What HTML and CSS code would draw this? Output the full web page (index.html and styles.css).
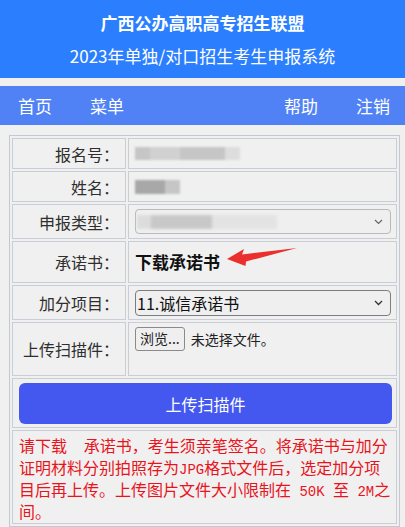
FILE: index.html
```html
<!DOCTYPE html>
<html lang="zh-CN">
<head>
<meta charset="utf-8">
<title>广西公办高职高专招生联盟</title>
<link rel="stylesheet" href="styles.css">
</head>
<body>
<header class="header">
  <div class="title-main">广西公办高职高专招生联盟</div>
  <div class="title-sub">2023年单独/对口招生考生申报系统</div>
</header>
<nav class="nav">
  <a class="nav-item">首页</a>
  <a class="nav-item">菜单</a>
  <a class="nav-item nav-push">帮助</a>
  <a class="nav-item">注销</a>
</nav>
<table class="form">
  <tr class="r-short">
    <td class="label">报名号：</td>
    <td class="value"><span class="blur blur-id"></span></td>
  </tr>
  <tr class="r-short">
    <td class="label">姓名：</td>
    <td class="value"><span class="blur blur-name"></span></td>
  </tr>
  <tr class="r-select">
    <td class="label">申报类型：</td>
    <td class="value">
      <div class="select select-faded">
        <span class="blur blur-type"></span>
        <svg class="chev" width="9" height="6" viewBox="0 0 9 6"><path d="M1 1 L4.5 4.5 L8 1" fill="none" stroke="#666" stroke-width="1.2"/></svg>
      </div>
    </td>
  </tr>
  <tr class="r-pledge">
    <td class="label">承诺书：</td>
    <td class="value">
      <div class="pledge">
        <a class="pledge-link">下载承诺书</a>
        <svg class="arrow" width="74" height="22" viewBox="0 0 74 22"><path d="M2 14 L19 4 L17 9.5 L72 3 L21 16.5 L20.5 21 Z" fill="#ea2f2c"/></svg>
      </div>
    </td>
  </tr>
  <tr class="r-select2">
    <td class="label">加分项目：</td>
    <td class="value">
      <div class="select">
        <span class="select-text">11.诚信承诺书</span>
        <svg class="chev" width="9" height="6" viewBox="0 0 9 6"><path d="M1 1 L4.5 4.5 L8 1" fill="none" stroke="#333" stroke-width="1.3"/></svg>
      </div>
    </td>
  </tr>
  <tr class="r-upload">
    <td class="label">上传扫描件：</td>
    <td class="value value-top">
      <div class="file">
        <span class="file-btn">浏览...</span>
        <span class="file-text">未选择文件。</span>
      </div>
    </td>
  </tr>
  <tr class="r-submit">
    <td class="submit-cell" colspan="2"><div class="submit">上传扫描件</div></td>
  </tr>
  <tr>
    <td class="notice" colspan="2">请下载<span class="half">&nbsp;&nbsp;</span>承诺书，考生须亲笔签名。将承诺书与加分证明材料分别拍照存为<span class="half">JPG</span>格式文件后，选定加分项目后再上传。上传图片文件大小限制在<span class="half">&nbsp;50K&nbsp;</span>至<span class="half">&nbsp;2M</span>之间。</td>
  </tr>
</table>
</body>
</html>
```
FILE: styles.css
```css
* { box-sizing: border-box; }
body {
  margin: 0;
  background: #f0f0f0;
  font-family: "Noto Sans CJK SC", "Noto Sans", sans-serif;
  color: #333;
}
.header {
  background: #2b7ffe;
  color: #fff;
  text-align: center;
  padding: 6px 0;
  font-size: 17px;
  line-height: 33px;
}
.title-main { font-weight: bold; }
.nav {
  margin-top: 8px;
  height: 39px;
  background: #5082f6;
  display: flex;
  align-items: center;
  gap: 38px;
  padding: 0 15px 0 18px;
}
.nav-item {
  color: #fff;
  font-size: 17px;
  line-height: 39px;
}
.nav-push { margin-left: auto; }

.form {
  width: calc(100% - 14px);
  margin: 10px 5px 0 9px;
  border: 1px solid #c3c8d1;
  border-spacing: 2px;
  border-collapse: separate;
  table-layout: fixed;
}
.form td {
  border: 1px solid #c9cdd6;
  padding: 0;
}
.label {
  width: 114px;
  text-align: right;
  padding-right: 6px !important;
  font-size: 16px;
  color: #2e2e2e;
  vertical-align: middle;
}
.value {
  padding: 0 5px 0 6px !important;
  vertical-align: middle;
}
.value-top { vertical-align: top !important; padding-top: 4px !important; }
.r-short td { height: 31px; }
.r-select td { height: 35px; }
.r-pledge td { height: 42px; }
.r-select2 td { height: 35px; }
.r-upload td { height: 54px; }
.r-submit td { height: 49px; }

.blur {
  display: block;
  filter: blur(0.9px);
}
.blur-id {
  width: 105px;
  height: 13px;
  background: linear-gradient(to right, #c6c6c6 0 15px, #d1d1d1 15px 45px, #c6c6c6 45px 90px, #dddddd 90px 105px);
}
.blur-name {
  width: 45px;
  height: 14px;
  background: linear-gradient(to right, #a8a8a8 0 30px, #c6c6c6 30px 45px);
}
.select {
  height: 25px;
  border: 1px solid #7d7d7d;
  border-radius: 4px;
  background: #efefef;
  display: flex;
  align-items: center;
  justify-content: space-between;
  padding: 0 7px 0 1px;
}
.r-select2 .select { height: 26px; }
.select-faded { border-color: #b9b9b9; }
.blur-type {
  width: 140px;
  height: 14px;
  filter: blur(1.6px);
  background: linear-gradient(to right, #dcdcdc 0 14px, #c8c8c8 14px 75px, #e3e3e3 75px 140px);
}
.select-text {
  font-size: 16px;
  color: #111;
  line-height: 24px;
}
.chev { display: block; }

.pledge {
  position: relative;
  line-height: 24px;
}
.pledge-link {
  font-size: 17px;
  font-weight: bold;
  color: #111;
}
.arrow {
  position: absolute;
  left: 90px;
  top: -5px;
}

.file {
  display: flex;
  align-items: center;
  gap: 6px;
}
.file-btn {
  display: inline-block;
  height: 24px;
  line-height: 21px;
  padding: 0 4px;
  border: 1px solid #8a8a8a;
  border-radius: 3px;
  background: #efefef;
  font-size: 14px;
  color: #222;
}
.file-text {
  font-size: 14px;
  color: #222;
}

.submit-cell {
  padding: 4px 4px 3px 6px !important;
}
.submit {
  height: 41px;
  border-radius: 6px;
  background: #4458f0;
  color: #fff;
  font-size: 16px;
  display: flex;
  align-items: center;
  justify-content: center;
}

.notice {
  padding: 3px 5px 1px 6px !important;
  font-size: 16px;
  line-height: 22px;
  color: #e8141c;
  height: 94px;
  vertical-align: top;
}
.half {
  font-family: "Liberation Mono", monospace;
  font-size: 14px;
  line-height: 0;
}
```
